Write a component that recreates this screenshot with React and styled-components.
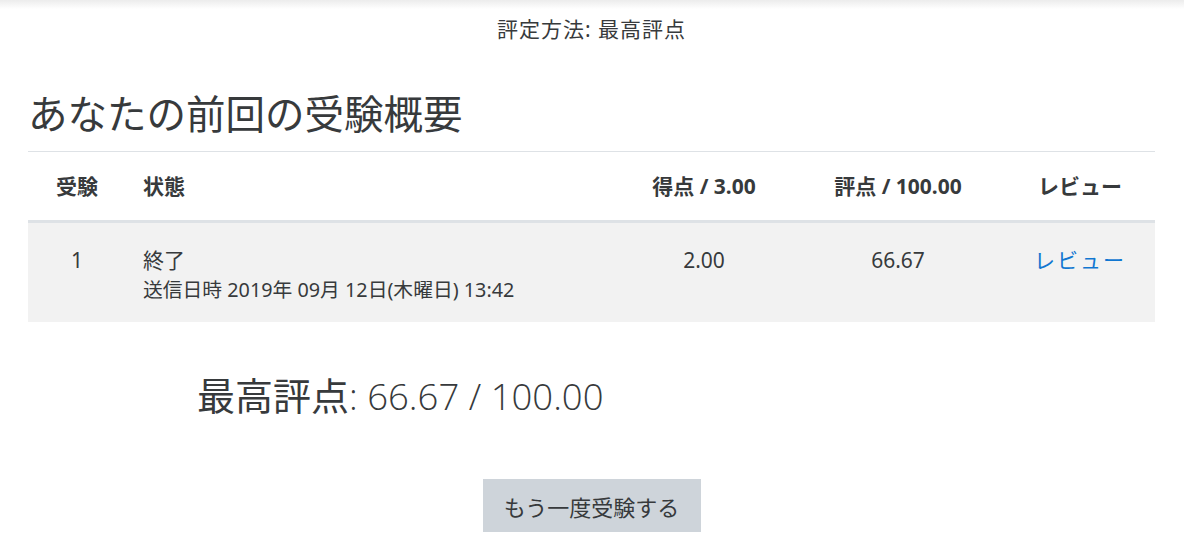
import React from "react";
import styled, { createGlobalStyle } from "styled-components";

const GlobalStyle = createGlobalStyle`
	body {
		margin: 0;
		background: #fff;
		color: #373a3c;
		font-family: "Noto Sans", "Noto Sans CJK JP", sans-serif;
	}
`;

const TopShade = styled.div`
	height: 9px;
	background: linear-gradient(to bottom, #ececec, #ffffff);
`;

const Page = styled.div`
	padding: 0 29px 0 28px;
`;

const GradingMethod = styled.p`
	margin: 6px 0 0;
	text-align: center;
	font-size: 21px;
	letter-spacing: 1px;
	line-height: 28px;
`;

const Heading = styled.h2`
	margin: 46px 0 0;
	font-size: 39.5px;
	font-weight: 400;
	line-height: 50px;
`;

const Table = styled.div`
	margin-top: 12px;
	border-top: 1px solid #dee2e6;
`;

const Row = styled.div`
	display: grid;
	grid-template-columns: 98px 491px 174px 214px 150px;
	background: ${(p) => (p.$shaded ? "#f2f2f2" : "transparent")};
	border-bottom: ${(p) => (p.$head ? "3px solid #dee2e6" : "none")};
	height: ${(p) => (p.$head ? "68px" : "99px")};
	align-items: ${(p) => (p.$head ? "center" : "start")};
`;

const Cell = styled.div`
	text-align: ${(p) => p.$align || "center"};
	padding: ${(p) => (p.$head ? "0 17px" : "22px 17px 0")};
	font-size: 21px;
	font-weight: ${(p) => (p.$head ? 700 : 400)};
	line-height: 30px;
	white-space: nowrap;
`;

const SubLine = styled.div`
	font-size: 19.8px;
	line-height: 30px;
`;

const ReviewLink = styled.a`
	color: #1177d1;
	text-decoration: none;
	letter-spacing: 2px;
`;

const Summary = styled.h3`
	margin: 48px 0 0 169px;
	font-size: 38px;
	font-weight: 400;
	line-height: 50px;
`;

const Score = styled.span`
	font-family: "Open Sans", "Noto Sans", sans-serif;
	font-size: 36.5px;
	font-weight: 300;
`;

const ButtonRow = styled.div`
	display: flex;
	justify-content: center;
	margin-top: 58px;
`;

const RetryButton = styled.button`
	background: #ced4da;
	border: none;
	border-radius: 0;
	width: 218px;
	height: 53px;
	padding: 0;
	font-family: inherit;
	font-size: 22px;
	color: #373a3c;
`;

export default function App() {
	return (
		<>
			<GlobalStyle />
			<TopShade />
			<Page>
				<GradingMethod>評定方法: 最高評点</GradingMethod>
				<Heading>あなたの前回の受験概要</Heading>
				<Table>
					<Row $head>
						<Cell $head>受験</Cell>
						<Cell $head $align="left">状態</Cell>
						<Cell $head>得点 / 3.00</Cell>
						<Cell $head>評点 / 100.00</Cell>
						<Cell $head>レビュー</Cell>
					</Row>
					<Row $shaded>
						<Cell>1</Cell>
						<Cell $align="left">
							終了
							<SubLine>送信日時 2019年 09月 12日(木曜日) 13:42</SubLine>
						</Cell>
						<Cell>2.00</Cell>
						<Cell>66.67</Cell>
						<Cell>
							<ReviewLink href="#">レビュー</ReviewLink>
						</Cell>
					</Row>
				</Table>
				<Summary>
					最高評点<Score>: 66.67 / 100.00</Score>
				</Summary>
				<ButtonRow>
					<RetryButton>もう一度受験する</RetryButton>
				</ButtonRow>
			</Page>
		</>
	);
}
